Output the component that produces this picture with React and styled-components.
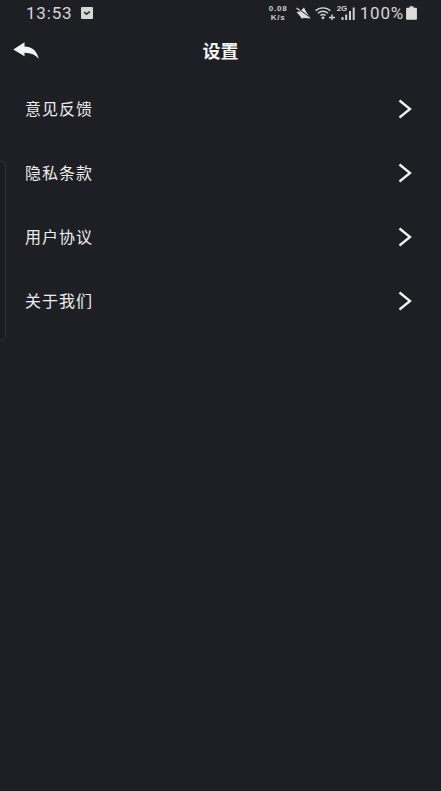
import React from "react";
import styled, { createGlobalStyle } from "styled-components";

const GlobalStyle = createGlobalStyle`
  html, body {
    margin: 0;
    padding: 0;
    height: 100%;
    background-color: #1e1f24;
  }
  #root {
    height: 100%;
  }
`;

const menuItems = ["意见反馈", "隐私条款", "用户协议", "关于我们"];

const App = () => {
  return (
    <Page>
      <GlobalStyle />
      <StatusBar>
        <StatusLeft>
          <Clock>13:53</Clock>
          <NotifyBadge>
            <svg width="10" height="10" viewBox="0 0 10 10">
              <path d="M2.2 4 L4.4 6.2 L7.8 3.6" fill="none" stroke="#26272b" strokeWidth="1.5" />
            </svg>
          </NotifyBadge>
        </StatusLeft>
        <StatusRight>
          <NetSpeed>
            <span>0.08</span>
            <span>K/s</span>
          </NetSpeed>
          <MuteIcon />
          <WifiIcon />
          <SignalIcon />
          <Battery>100%</Battery>
          <BatteryIcon />
        </StatusRight>
      </StatusBar>
      <Header>
        <BackButton>
          <svg width="26" height="17" viewBox="0 0 26 17">
            <path
              d="M0.3 7.4 L11.5 0.3 L11.5 4.4 C18.5 4.4 24 8.5 25.8 16.8 C22.5 12.8 18 10.8 11.5 10.7 L11.5 14.2 Z"
              fill="#f4f4f4"
            />
          </svg>
        </BackButton>
        <Title>设置</Title>
      </Header>
      <Menu>
        {menuItems.map(item => (
          <MenuRow key={item}>
            <RowLabel>{item}</RowLabel>
            <svg width="14" height="20" viewBox="0 0 14 20">
              <path d="M1.5 1.5 L12 10 L1.5 18.5" fill="none" stroke="#f4f4f4" strokeWidth="2.3" />
            </svg>
          </MenuRow>
        ))}
      </Menu>
      <EdgeHandle />
    </Page>
  );
};

const MuteIcon = () => (
  <StatusIcon $gap={7} width="15" height="12" viewBox="0 0 15 12">
    <path d="M0.5 5 L4 4.5 L8 0.5 L10 4.5 L13 9 L14.5 11.5 L8.5 11 L5.5 11.5 L4 9 Z" fill="#dcdcdc" />
    <path d="M0.5 0.5 L13 9.5" stroke="#1e1f24" strokeWidth="1" />
    <path d="M0.5 1 L4 3.4" stroke="#dcdcdc" strokeWidth="1.2" />
  </StatusIcon>
);

const WifiIcon = () => (
  <StatusIcon $gap={4} width="20" height="13" viewBox="0 0 20 13">
    <g fill="none" stroke="#d4d4d4" strokeWidth="1.3">
      <path d="M0.6 3.8 C4.5 0 11.5 0 15.4 3.8" />
      <path d="M3 6.2 C5.8 3.6 10.2 3.6 13 6.2" />
      <path d="M5.4 8.6 C7 7.2 9 7.2 10.6 8.6" />
    </g>
    <circle cx="8" cy="10.8" r="1.4" fill="#d4d4d4" />
    <path d="M14 10.5 L20 10.5 M17 7.5 L17 13" stroke="#d4d4d4" strokeWidth="1.4" />
  </StatusIcon>
);

const SignalIcon = () => (
  <SignalWrap>
    <SignalTag>2G</SignalTag>
    <SignalBars width="14" height="13" viewBox="0 0 14 13">
      <path d="M0.5 10 h2 v3 h-2 Z M4.2 7.5 h2 v5.5 h-2 Z M8 4 h2 v9 h-2 Z M11.7 0.5 h2 v12.5 h-2 Z" fill="#d0d0d0" />
    </SignalBars>
  </SignalWrap>
);

const BatteryIcon = () => (
  <StatusIcon $gap={2} width="11" height="14" viewBox="0 0 11 14">
    <path d="M3.5 0.3 h4 v1.5 h2.6 a0.8 0.8 0 0 1 0.8 0.8 V13 a0.8 0.8 0 0 1 -0.8 0.8 H0.9 a0.8 0.8 0 0 1 -0.8 -0.8 V2.6 A0.8 0.8 0 0 1 0.9 1.8 h2.6 Z" fill="#dcdcdc" />
  </StatusIcon>
);

const Page = styled.div`
  position: relative;
  width: 100%;
  min-height: 100%;
  background-color: #1e1f24;
  font-family: "Liberation Sans", "Noto Sans CJK SC", sans-serif;
  color: #f2f2f2;
  overflow: hidden;
`;

const StatusBar = styled.div`
  height: 26px;
  display: flex;
  align-items: center;
  justify-content: space-between;
  padding: 0 24px 0 26px;
`;

const StatusLeft = styled.div`
  display: flex;
  align-items: center;
  gap: 9px;
`;

const Clock = styled.span`
  font-family: "Roboto", sans-serif;
  font-size: 17px;
  letter-spacing: 0.8px;
  color: #d6d6d6;
`;

const NotifyBadge = styled.div`
  width: 12px;
  height: 12px;
  border-radius: 1px;
  background-color: #d6d6d6;
  display: flex;
  align-items: center;
  justify-content: center;
`;

const StatusRight = styled.div`
  display: flex;
  align-items: center;
`;

const StatusIcon = styled.svg`
  display: block;
  flex: none;
  margin-left: ${props => props.$gap}px;
`;

const NetSpeed = styled.div`
  width: 21px;
  display: flex;
  flex-direction: column;
  align-items: center;
  font-size: 8px;
  font-weight: 700;
  letter-spacing: 0.8px;
  line-height: 9.2px;
  color: #cfcfcf;
`;

const SignalWrap = styled.div`
  position: relative;
  width: 18px;
  height: 14px;
  margin-left: 2px;
  display: flex;
  justify-content: flex-end;
  align-items: flex-end;
`;

const SignalBars = styled.svg`
  display: block;
`;

const SignalTag = styled.span`
  position: absolute;
  top: -1px;
  left: 0;
  font-size: 8px;
  font-weight: 700;
  line-height: 8px;
  color: #d4d4d4;
`;

const Battery = styled.span`
  margin-left: 5px;
  font-family: "Roboto", sans-serif;
  font-size: 17px;
  letter-spacing: 0.8px;
  color: #d6d6d6;
`;

const Header = styled.div`
  position: relative;
  height: 51px;
  display: flex;
  align-items: center;
  justify-content: center;
`;

const BackButton = styled.div`
  position: absolute;
  left: 13px;
  top: 16px;
  line-height: 0;
`;

const Title = styled.div`
  margin-bottom: 4px;
  font-size: 18px;
  font-weight: 700;
  color: #f4f4f4;
`;

const Menu = styled.div`
  display: flex;
  flex-direction: column;
`;

const MenuRow = styled.div`
  height: 64px;
  display: flex;
  align-items: center;
  justify-content: space-between;
  padding: 0 29px 0 25px;
`;

const RowLabel = styled.span`
  margin-bottom: 3px;
  font-size: 16px;
  letter-spacing: 1px;
  color: #ececec;
`;

const EdgeHandle = styled.div`
  position: absolute;
  left: -4px;
  top: 161px;
  width: 8px;
  height: 178px;
  border: 1px solid #33343a;
  border-radius: 5px;
  background-color: #1b1c20;
`;

export default App;
